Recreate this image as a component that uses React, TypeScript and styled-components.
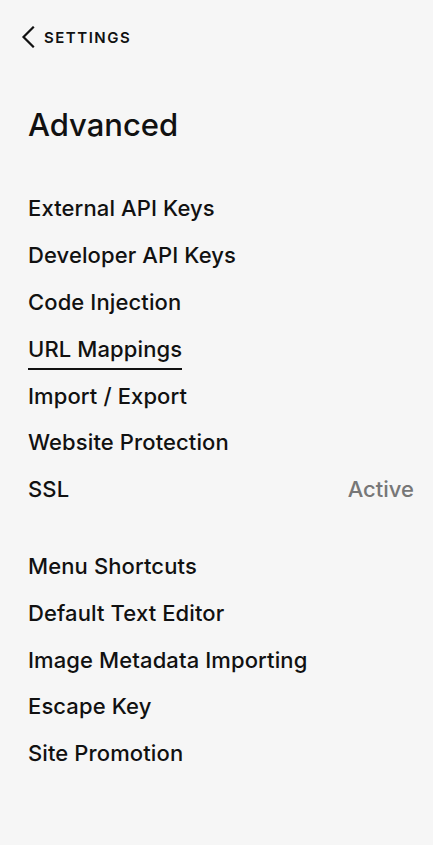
import React from 'react';
import styled, { createGlobalStyle } from 'styled-components';

const GlobalStyle = createGlobalStyle`
  html, body {
    margin: 0;
    padding: 0;
    background: #f6f6f6;
  }
  body {
    font-family: Inter, "Noto Sans", "Liberation Sans", sans-serif;
    color: #111111;
    -webkit-font-smoothing: antialiased;
  }
`;

const Panel = styled.div`
  width: 433px;
  min-height: 845px;
  box-sizing: border-box;
  background: #f6f6f6;
  padding: 0 19px 0 28px;
`;

const BackLink = styled.a`
  display: flex;
  align-items: center;
  gap: 9px;
  height: 20px;
  margin: 27px 0 0 -7px;
  color: #111;
  text-decoration: none;
  font-size: 15px;
  font-weight: 600;
  letter-spacing: 0.1em;
  cursor: pointer;
`;

const Title = styled.h1`
  margin: 60px 0 0 0;
  font-size: 31px;
  line-height: 36px;
  font-weight: 500;
  letter-spacing: 0;
`;

const List = styled.ul`
  list-style: none;
  margin: 0;
  padding: 0;
`;

const FirstList = styled(List)`
  margin-top: 42px;
`;

const SecondList = styled(List)`
  margin-top: 30px;
`;

const Row = styled.li`
  display: flex;
  align-items: center;
  justify-content: space-between;
  height: 46.8px;
  font-size: 22px;
  font-weight: 500;
`;

const Label = styled.span<{ $active?: boolean }>`
  line-height: 24px;
  letter-spacing: 0.005em;
  border-bottom: 2px solid ${({ $active }) => ($active ? '#111' : 'transparent')};
  padding-bottom: 7px;
  margin-top: 9px;
`;

const Status = styled.span`
  color: #777777;
  font-size: 22px;
  font-weight: 500;
`;

const Chevron = () => (
  <svg width="14" height="22" viewBox="0 0 14 22" fill="none">
    <path d="M12 1.5L2.5 11L12 20.5" stroke="#111" strokeWidth="2.2" strokeLinecap="square" />
  </svg>
);

const groupOne = [
  { label: 'External API Keys' },
  { label: 'Developer API Keys' },
  { label: 'Code Injection' },
  { label: 'URL Mappings', active: true },
  { label: 'Import / Export' },
  { label: 'Website Protection' },
  { label: 'SSL', status: 'Active' },
];

const groupTwo = [
  { label: 'Menu Shortcuts' },
  { label: 'Default Text Editor' },
  { label: 'Image Metadata Importing' },
  { label: 'Escape Key' },
  { label: 'Site Promotion' },
];

const App: React.FC = () => {
  return (
    <>
      <GlobalStyle />
      <Panel>
        <BackLink>
          <Chevron />
          SETTINGS
        </BackLink>
        <Title>Advanced</Title>
        <FirstList>
          {groupOne.map((item) => (
            <Row key={item.label}>
              <Label $active={item.active}>{item.label}</Label>
              {item.status && <Status>{item.status}</Status>}
            </Row>
          ))}
        </FirstList>
        <SecondList>
          {groupTwo.map((item) => (
            <Row key={item.label}>
              <Label>{item.label}</Label>
            </Row>
          ))}
        </SecondList>
      </Panel>
    </>
  );
};

export default App;
